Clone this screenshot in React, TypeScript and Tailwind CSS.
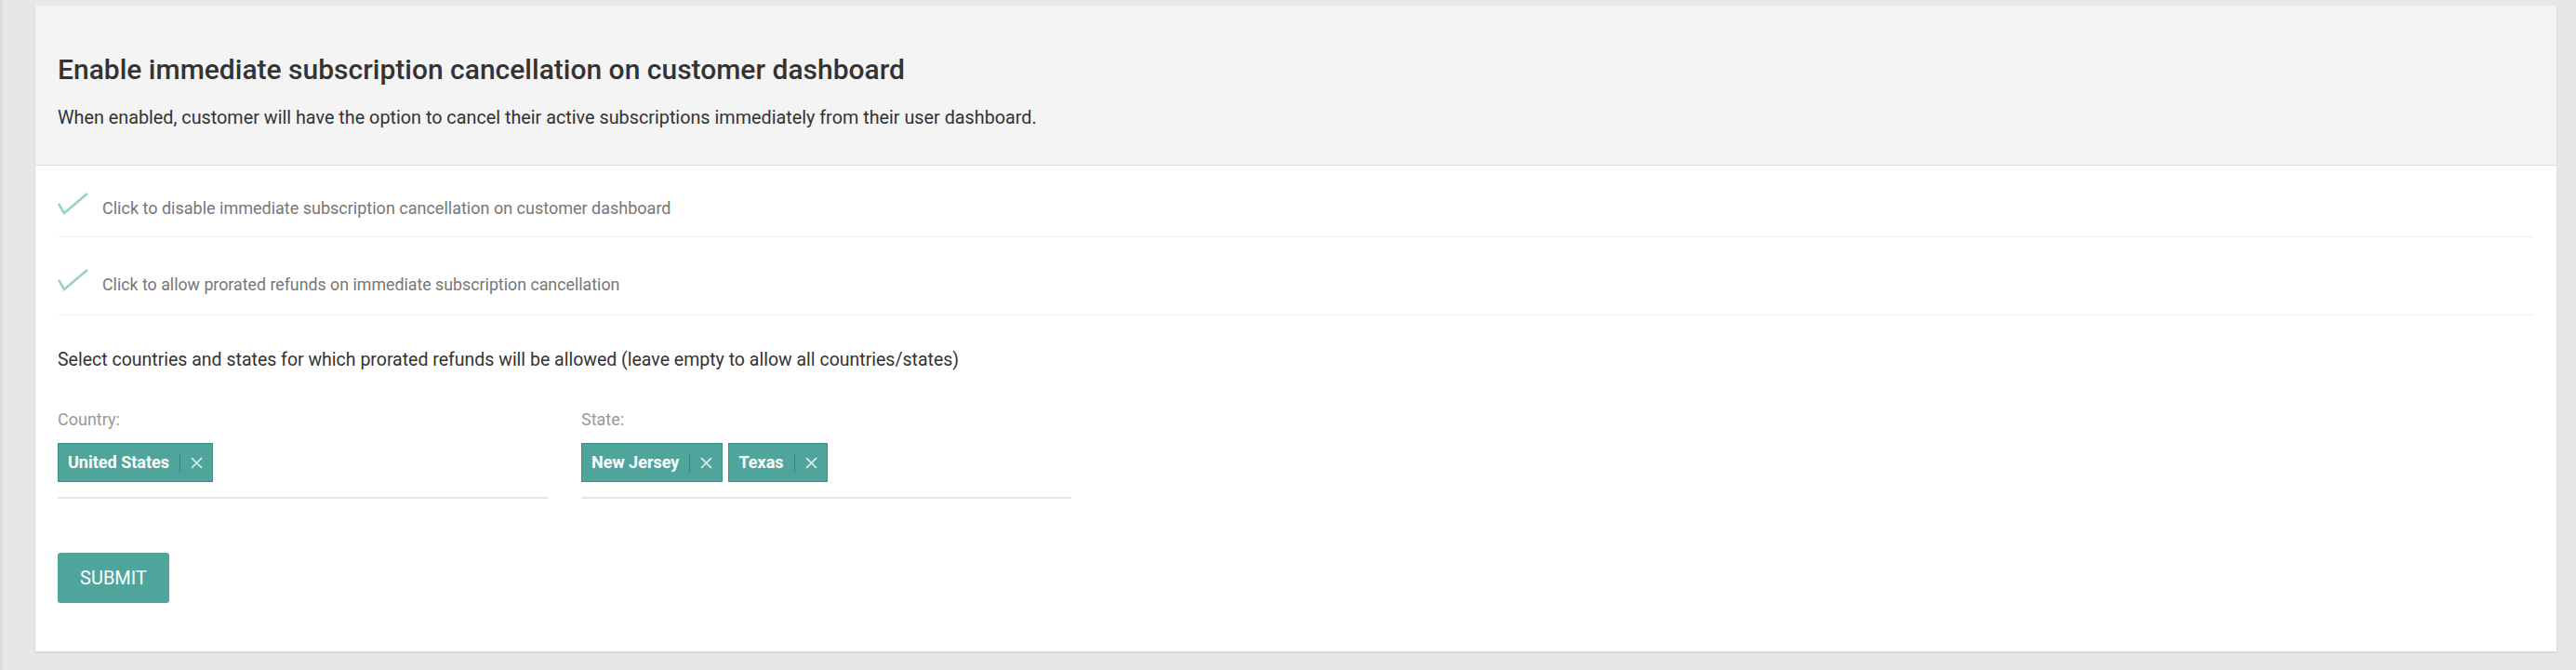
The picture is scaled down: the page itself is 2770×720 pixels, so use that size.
import React from "react";

function Check() {
  return (
    <svg width="34" height="26" viewBox="0 0 34 26" className="mb-[4px] shrink-0">
      <polyline points="1,13 7,23 32,2" fill="none" stroke="#95d0c9" strokeWidth="2.5" strokeLinejoin="miter" />
    </svg>
  );
}

function Chip({ label }: { label: string }) {
  return (
    <div className="flex h-[42px] items-center border border-[#3f8f87] bg-[#4fa59c] pl-[10px] pr-[10px] text-white">
      <span className="text-[18px] font-bold leading-none">{label}</span>
      <span className="mx-[11px] h-[21px] w-px bg-[#3a857d]" />
      <svg width="13" height="13" viewBox="0 0 12 12">
        <path d="M1 1 L11 11 M11 1 L1 11" stroke="#d6ece9" strokeWidth="1.5" />
      </svg>
    </div>
  );
}

export default function App() {
  return (
    <div
      className="flex h-[720px] w-[2770px] bg-[#e6e7e6]"
      style={{ fontFamily: "Roboto, 'Noto Sans', sans-serif" }}
    >
      <div className="w-[3px] bg-[#dcdddc]" />
      <div className="ml-[35px] mt-[6px] mr-[21px] mb-[20px] flex flex-1 flex-col bg-white shadow-[0_1px_2px_rgba(0,0,0,0.12)]">
        <div className="h-[172px] border-b border-[#dcdcdc] bg-[#f4f4f4] px-[24px] pt-[52px]">
          <h1 className="text-[30px] font-medium leading-[34px] text-[#333]">
            Enable immediate subscription cancellation on customer dashboard
          </h1>
          <p className="mt-[22px] text-[19.8px] leading-[26px] text-[#333]">
            When enabled, customer will have the option to cancel their active subscriptions immediately from their user dashboard.
          </p>
        </div>
        <div className="flex flex-1 flex-col px-[24px]">
          <div className="flex h-[77px] items-end gap-[14px] border-b border-[#efefef] pb-[18px]">
            <Check />
            <span className="text-[18px] leading-[24px] text-[#777]">
              Click to disable immediate subscription cancellation on customer dashboard
            </span>
          </div>
          <div className="flex h-[84px] items-end gap-[14px] border-b border-[#efefef] pb-[20px]">
            <Check />
            <span className="text-[17.8px] leading-[24px] text-[#777]">
              Click to allow prorated refunds on immediate subscription cancellation
            </span>
          </div>
          <p className="mt-[35px] text-[19.5px] leading-[26px] text-[#333]">
            Select countries and states for which prorated refunds will be allowed (leave empty to allow all countries/states)
          </p>
          <div className="mt-[39px] flex gap-[36px]">
            <div className="w-[527px]">
              <div className="text-[18px] leading-[24px] text-[#999]">Country:</div>
              <div className="mt-[13px] flex gap-[6px] border-b-2 border-[#e6e6e6] pb-[16px]">
                <Chip label="United States" />
              </div>
            </div>
            <div className="w-[527px]">
              <div className="text-[18px] leading-[24px] text-[#999]">State:</div>
              <div className="mt-[13px] flex gap-[6px] border-b-2 border-[#e6e6e6] pb-[16px]">
                <Chip label="New Jersey" />
                <Chip label="Texas" />
              </div>
            </div>
          </div>
          <div className="mt-[58px]">
            <button className="flex h-[54px] w-[120px] items-center justify-center rounded-[3px] bg-[#4fa59c] text-[20px] text-white">
              SUBMIT
            </button>
          </div>
        </div>
      </div>
    </div>
  );
}
